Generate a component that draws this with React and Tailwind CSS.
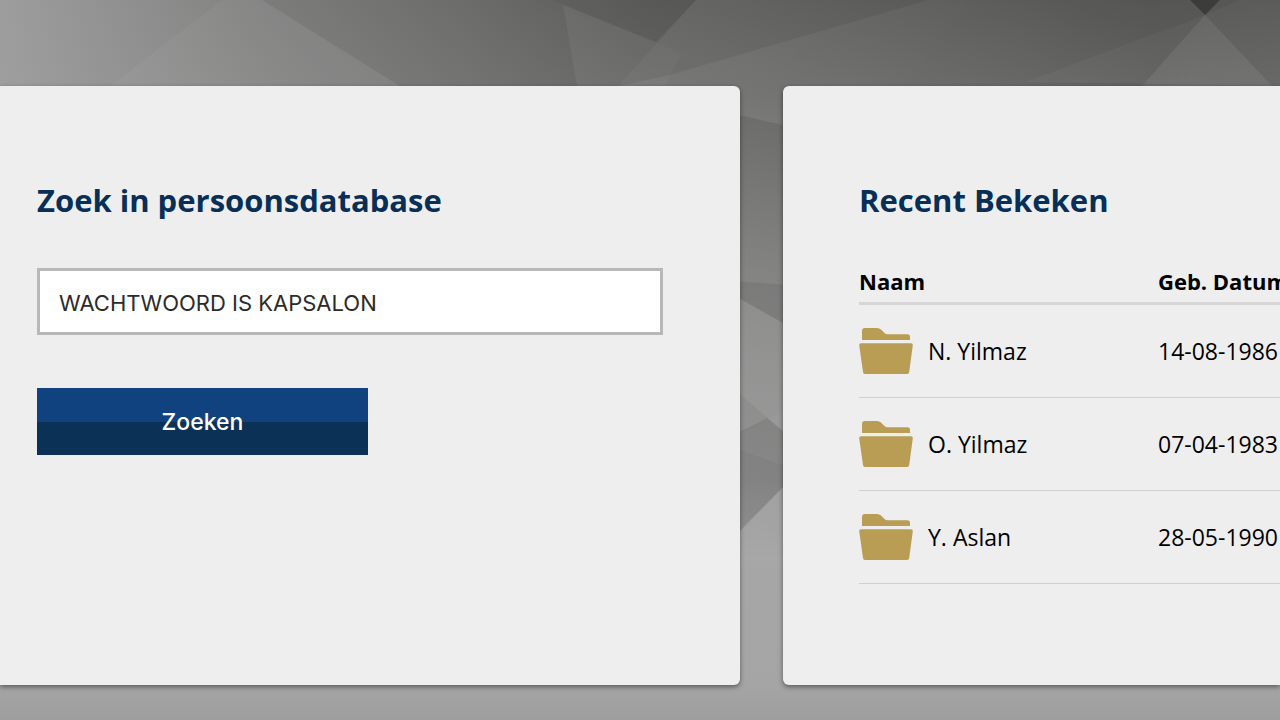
import React from "react";

const people = [
  { name: "N. Yilmaz", born: "14-08-1986" },
  { name: "O. Yilmaz", born: "07-04-1983" },
  { name: "Y. Aslan", born: "28-05-1990" },
];

function Backdrop() {
  return (
    <svg
      aria-hidden="true"
      className="absolute inset-0 -z-10 h-full w-full"
      viewBox="0 0 1280 720"
      preserveAspectRatio="xMidYMin slice"
    >
      <defs>
        <linearGradient id="across" x1="0" y1="0" x2="1" y2="0">
          <stop offset="0" stopColor="#9d9d9d" />
          <stop offset="0.08" stopColor="#929292" />
          <stop offset="0.2" stopColor="#828281" />
          <stop offset="0.35" stopColor="#727271" />
          <stop offset="0.5" stopColor="#616160" />
          <stop offset="0.7" stopColor="#555553" />
          <stop offset="0.9" stopColor="#494947" />
          <stop offset="1" stopColor="#4e4e4c" />
        </linearGradient>
        <linearGradient id="down" x1="0" y1="0" x2="0" y2="1">
          <stop offset="0" stopColor="#a6a6a6" stopOpacity="0" />
          <stop offset="0.12" stopColor="#a6a6a6" stopOpacity="0.15" />
          <stop offset="0.163" stopColor="#a6a6a6" stopOpacity="0.23" />
          <stop offset="0.28" stopColor="#a6a6a6" stopOpacity="0.4" />
          <stop offset="0.38" stopColor="#a6a6a6" stopOpacity="0.54" />
          <stop offset="0.5" stopColor="#a6a6a6" stopOpacity="0.64" />
          <stop offset="0.67" stopColor="#a6a6a6" stopOpacity="0.76" />
          <stop offset="0.78" stopColor="#a6a6a6" stopOpacity="1" />
          <stop offset="0.95" stopColor="#a5a5a5" />
          <stop offset="1" stopColor="#9e9e9e" />
        </linearGradient>
        <linearGradient id="facet" x1="0" y1="0" x2="0" y2="1">
          <stop offset="0" stopColor="#fff" stopOpacity="0.12" />
          <stop offset="1" stopColor="#fff" stopOpacity="0" />
        </linearGradient>
        <linearGradient id="wedge" x1="0" y1="0" x2="1" y2="0">
          <stop offset="0" stopColor="#fff" stopOpacity="0.06" />
          <stop offset="0.5" stopColor="#fff" stopOpacity="0.04" />
          <stop offset="1" stopColor="#fff" stopOpacity="0.02" />
        </linearGradient>
      </defs>
      <rect width="1280" height="720" fill="url(#across)" />
      <rect width="1280" height="720" fill="url(#down)" />
      <g fill="#fff">
        <polygon points="222,0 262,0 400,86 110,86" fillOpacity="0.04" />
        <polygon points="563,5 682,53 665,86 577,86" fillOpacity="0.06" />
        <polygon points="696,0 1280,0 1280,140 783,125 735,114 618,86" fillOpacity="0.04" />
        <polygon points="1025,82 1205,15 1240,0 1280,0 1280,86" fillOpacity="0.03" />
        <polygon points="1205,15 1272,86 1142,86" fillOpacity="0.07" />
        <polygon points="735,296 790,327 790,437 735,390" fillOpacity="0.07" />
        <polygon points="735,434 790,408 790,437 767,418" fillOpacity="0.03" />
      </g>
      <polygon points="670,75 928,0 1280,0 1280,140 783,125 735,114 620,86" fill="url(#wedge)" />
      <polygon points="790,480 790,575 735,575 735,536" fill="url(#facet)" />
      <g fill="#000">
        <polygon points="262,0 552,0 682,53 665,86 400,86" fillOpacity="0.04" />
        <polygon points="552,0 696,0 656,42" fillOpacity="0.08" />
        <polygon points="1190,0 1220,0 1205,15" fillOpacity="0.3" />
        <polygon points="735,281 790,285 790,327 735,296" fillOpacity="0.07" />
        <polygon points="735,434 767,418 790,437 790,480 735,536" fillOpacity="0.08" />
        <polygon points="735,448 790,468 790,480 735,536" fillOpacity="0.03" />
      </g>
    </svg>
  );
}

function Folder() {
  return (
    <svg
      aria-hidden="true"
      className="h-[46px] w-[54px] shrink-0 fill-[#b99d55]"
      viewBox="0 0 54 46"
    >
      <path d="M3 12V3Q3 0 6 0H18Q20.500 0 22 1.500L25.500 5Q26.800 6.200 28.500 6.200H48.500Q51 6.200 51 8.700V12Z" />
      <path d="M2 15.200H52Q54 15.200 53.800 17.200L50.200 44Q50 46 48 46H6Q4.200 46 4 44L.2 17.200Q0 15.200 2 15.200Z" />
    </svg>
  );
}

export default function App() {
  return (
    <div className="relative isolate min-h-screen overflow-hidden font-['Open_Sans','Noto_Sans',sans-serif]">
      <Backdrop />
      <main className="grid grid-cols-[740fr_497fr] gap-[43px] pt-[86px] pb-[35px]">
        <section className="min-h-[599px] rounded-r-md bg-[#eeeeee] pt-[94px] pr-[77px] pl-[37px] shadow-[0_2px_5px_rgba(0,0,0,0.45)]">
          <h2 className="text-[31px] leading-10 font-bold text-[#072f57]">
            <label htmlFor="query">Zoek in persoonsdatabase</label>
          </h2>
          <form onSubmit={(event) => event.preventDefault()}>
            <input
              id="query"
              type="text"
              defaultValue="WACHTWOORD IS KAPSALON"
              className="mt-12 block h-[67px] w-full border-3 border-[#b8b8b8] bg-white px-[19px] pt-0.5 font-['Inter',sans-serif] text-[22px] text-[#2b2b2b] outline-none"
            />
            <button
              type="submit"
              className="mt-[53px] block h-[67px] w-[331px] bg-linear-to-b from-[#10427f] from-50% to-[#0b3157] to-50% pt-0.5 font-['Inter',sans-serif] text-[23px] font-medium text-white"
            >
              Zoeken
            </button>
          </form>
        </section>

        <section className="min-h-[599px] min-w-0 rounded-l-md bg-[#eeeeee] pt-[94px] pl-[76px] shadow-[0_2px_5px_rgba(0,0,0,0.45)]">
          <h2 className="text-[31px] leading-10 font-bold text-[#072f57]">Recent Bekeken</h2>
          <table className="mt-10 w-full table-fixed border-separate border-spacing-0 text-left text-[23px] whitespace-nowrap text-black">
            <thead>
              <tr className="h-[45px] text-[22px]">
                <th className="w-[299px] border-b-3 border-[#d6d6d6] font-bold">Naam</th>
                <th className="border-b-3 border-[#d6d6d6] font-bold">Geb. Datum</th>
              </tr>
            </thead>
            <tbody>
              {people.map((person) => (
                <tr key={person.name} className="h-[93px]">
                  <td className="border-b border-[#cfcfcf]">
                    <div className="flex items-center gap-[15px]">
                      <Folder />
                      {person.name}
                    </div>
                  </td>
                  <td className="border-b border-[#cfcfcf]">{person.born}</td>
                </tr>
              ))}
            </tbody>
          </table>
        </section>
      </main>
    </div>
  );
}
